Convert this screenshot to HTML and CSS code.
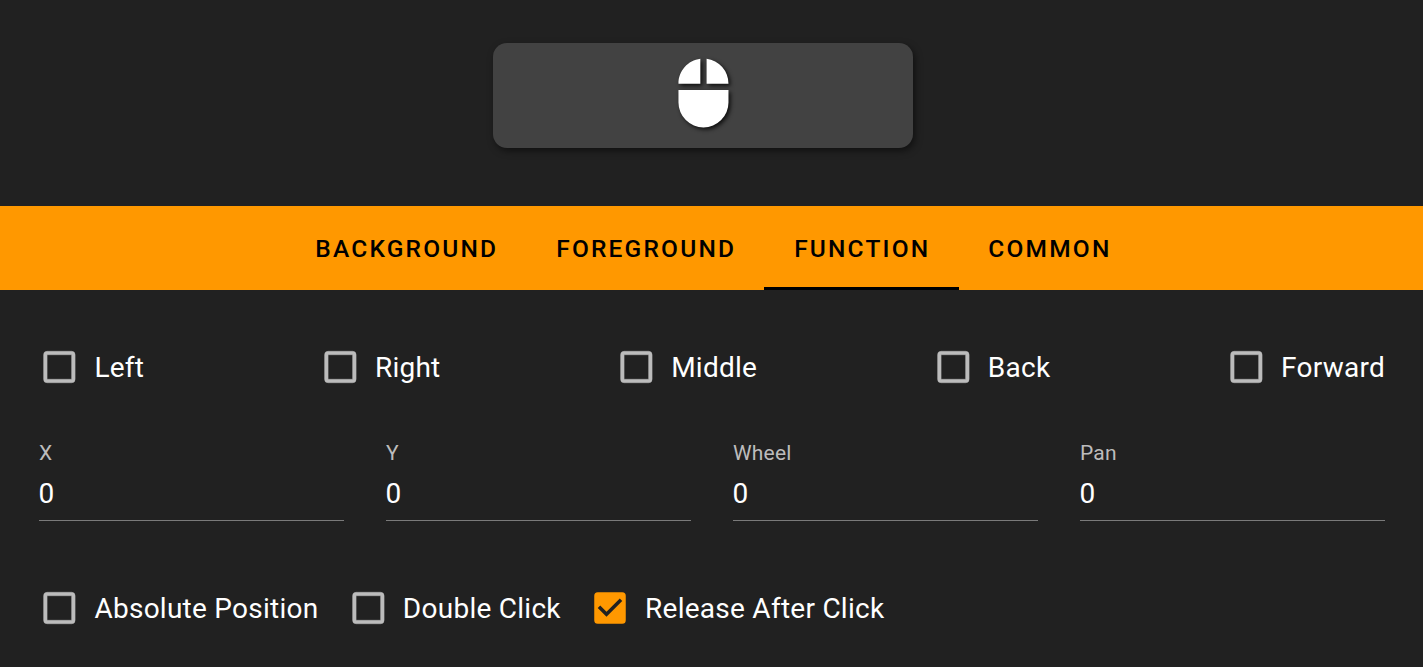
FILE: index.html
```html
<!DOCTYPE html>
<html lang="en">
<head>
<meta charset="utf-8">
<title>Mouse</title>
<link rel="stylesheet" href="styles.css">
</head>
<body>
<svg class="defs">
  <symbol id="blank" viewBox="-.2 0 24 24"><path d="M19 3H5a2 2 0 0 0-2 2v14a2 2 0 0 0 2 2h14a2 2 0 0 0 2-2V5a2 2 0 0 0-2-2m0 2v14H5V5h14z"/></symbol>
  <symbol id="marked" viewBox="0 0 24 24"><path d="M10 17l-5-5 1.410-1.420L10 14.170l7.590-7.590L19 8m0-5H5a2 2 0 0 0-2 2v14a2 2 0 0 0 2 2h14a2 2 0 0 0 2-2V5a2 2 0 0 0-2-2z"/></symbol>
</svg>
<header class="preview">
  <div class="key">
    <svg class="mouse" viewBox="-.15 -.16 24 24"><path d="M11 1.070C7.050 1.560 4 4.920 4 9h7m-7 6a8 8 0 0 0 8 8 8 8 0 0 0 8-8v-4H4m9-9.930V9h7a8 8 0 0 0-7-7.930z"/></svg>
  </div>
</header>
<nav class="tabs">
  <a class="tab">Background</a>
  <a class="tab">Foreground</a>
  <a class="tab active">Function</a>
  <a class="tab">Common</a>
</nav>
<main class="panel">
  <div class="row spread">
    <label class="check"><svg class="box"><use href="#blank"/></svg>Left</label>
    <label class="check"><svg class="box"><use href="#blank"/></svg>Right</label>
    <label class="check"><svg class="box"><use href="#blank"/></svg>Middle</label>
    <label class="check"><svg class="box"><use href="#blank"/></svg>Back</label>
    <label class="check"><svg class="box"><use href="#blank"/></svg>Forward</label>
  </div>
  <div class="fields">
    <div class="field"><span class="caption">X</span><span class="value">0</span></div>
    <div class="field"><span class="caption">Y</span><span class="value">0</span></div>
    <div class="field"><span class="caption">Wheel</span><span class="value">0</span></div>
    <div class="field"><span class="caption">Pan</span><span class="value">0</span></div>
  </div>
  <div class="row options">
    <label class="check"><svg class="box"><use href="#blank"/></svg>Absolute Position</label>
    <label class="check"><svg class="box"><use href="#blank"/></svg>Double Click</label>
    <label class="check"><svg class="box on"><use href="#marked"/></svg>Release After Click</label>
  </div>
</main>
</body>
</html>
```
FILE: styles.css
```css
* { box-sizing: border-box; }
body {
  margin: 0;
  height: 667px;
  overflow: hidden;
  background: #212121;
  color: #fff;
  font-family: Roboto, sans-serif;
}
.defs { display: none; }
.preview {
  height: 206px;
  padding: 43px 0 0 493px;
}
.key {
  width: 420px;
  height: 105px;
  padding: 12px 0 0 168px;
  border-radius: 14px;
  background: #424242;
  box-shadow: 2px 3px 7px rgba(0, 0, 0, .5);
}
.mouse {
  display: block;
  width: 84px;
  height: 75px;
  fill: #fff;
  filter: drop-shadow(2px 2px 2px rgba(0, 0, 0, .8));
}
.tabs {
  display: flex;
  height: 84px;
  padding-left: 285.500px;
  background: #ff9800;
}
.tab {
  padding: 1px 28.200px 0 29.800px;
  border-bottom: 3px solid transparent;
  color: #000;
  font-size: 24.500px;
  font-weight: 500;
  letter-spacing: 2.190px;
  line-height: 84px;
  text-transform: uppercase;
}
.active { border-bottom-color: #000; }
.panel { padding: 56px 38px 0 39px; }
.row {
  display: flex;
  height: 42px;
  margin-left: -.600px;
}
.check {
  display: flex;
  align-items: center;
  gap: 14px;
  font-size: 28px;
  letter-spacing: .260px;
  white-space: nowrap;
}
.spread { justify-content: space-between; }
.box {
  width: 42px;
  height: 42px;
  fill: #bcbcbc;
  stroke: #bcbcbc;
  stroke-width: .25;
}
.on { fill: #ff9800; stroke: none; }
.fields {
  display: grid;
  grid-template-columns: repeat(4, 1fr);
  gap: 42px;
  margin-top: 51px;
}
.field {
  display: flex;
  flex-direction: column;
  height: 82px;
  border-bottom: 1px solid #7a7a7a;
}
.caption {
  color: #bcbcbc;
  font-size: 21px;
  letter-spacing: .200px;
  line-height: 28px;
}
.value {
  margin-left: -.400px;
  font-size: 28px;
  line-height: 54px;
}
.options { gap: 28.300px; margin-top: 66px; }
```
